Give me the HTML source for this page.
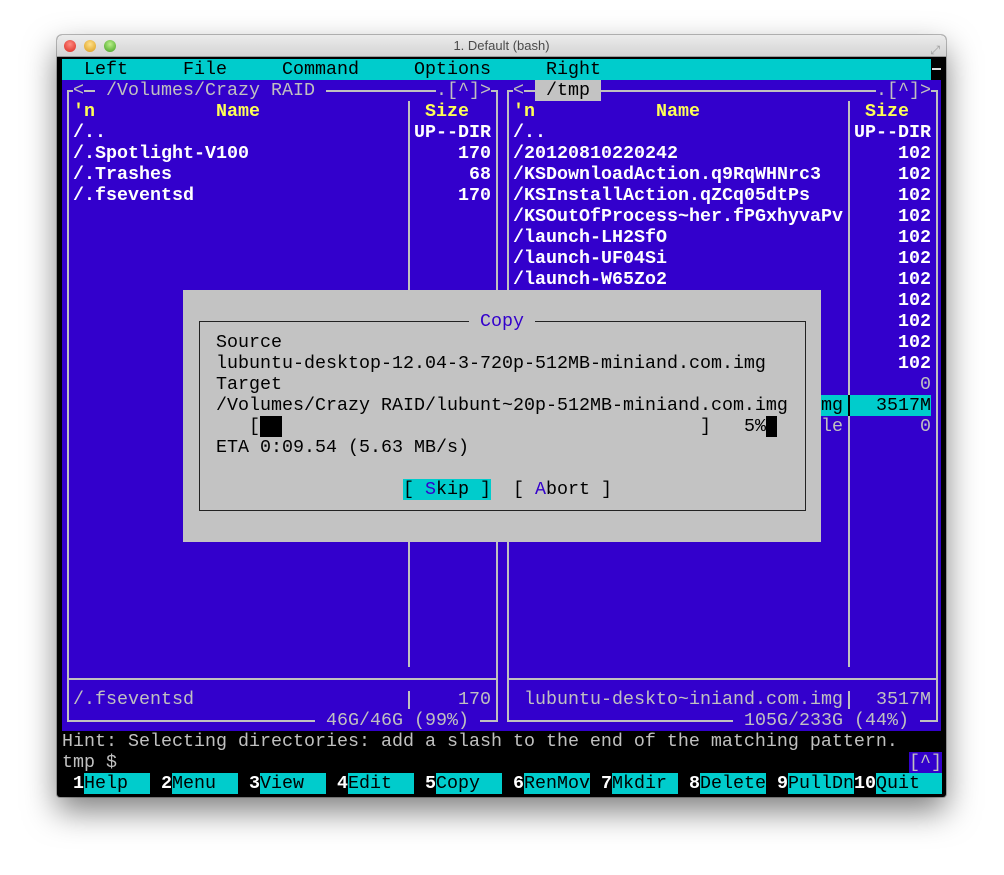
<!DOCTYPE html>
<html><head><meta charset="utf-8"><style>
*{margin:0;padding:0;box-sizing:border-box}
body{width:1004px;height:875px;background:#fff;position:relative;overflow:hidden;font-family:"Liberation Mono",monospace;}
.win{position:absolute;left:57px;top:35px;width:889px;height:762px;border-radius:5px 5px 3px 3px;box-shadow:0 14px 32px rgba(0,0,0,.5),0 0 0 1px rgba(0,0,0,.25);background:#000;overflow:hidden}
.title{position:absolute;left:0;top:0;width:889px;height:22px;background:linear-gradient(#ececec,#d3d3d3);border-bottom:1px solid #999;font-family:"Liberation Sans",sans-serif;font-size:13px;color:#4a4a4a;text-align:center;line-height:22px}
.dot{position:absolute;top:5px;width:12px;height:12px;border-radius:50%}
.t{position:absolute;font-size:18.33px;line-height:21px;height:21px;white-space:pre;color:#c0c0c0}
.b{font-weight:bold;color:#fff}
.y{font-weight:bold;color:#ffff55}
.bg{background:#3300cc}
.k{color:#000}
.h{position:absolute;height:2px;background:#c0c0c0}
.v{position:absolute;width:2px;background:#c0c0c0}
</style></head><body>
<div class="win">
<div class="title">1. Default (bash)
<div class="dot" style="left:7px;background:radial-gradient(circle at 50% 35%,#ff8a80,#d8261c)"></div>
<div class="dot" style="left:27px;background:radial-gradient(circle at 50% 35%,#ffe08a,#d99a16)"></div>
<div class="dot" style="left:47px;background:radial-gradient(circle at 50% 35%,#b9ef8a,#3f9e1c)"></div>
<div style="position:absolute;right:6px;top:4px;font-size:12px;color:#999">⤢</div>
</div>
</div>
<div style="position:absolute;left:62px;top:80px;width:879px;height:651px;background:#3300cc"></div>
<div style="position:absolute;left:62px;top:59px;width:869px;height:21px;background:#00cccc"></div>
<div class="h" style="left:932px;top:68px;width:9px;background:#ddd"></div>
<div class="t k" style="left:84px;top:59px">Left</div>
<div class="t k" style="left:183px;top:59px">File</div>
<div class="t k" style="left:282px;top:59px">Command</div>
<div class="t k" style="left:414px;top:59px">Options</div>
<div class="t k" style="left:546px;top:59px">Right</div>
<div class="h" style="left:67px;top:90px;width:431px"></div>
<div class="h" style="left:507px;top:90px;width:431px"></div>
<div class="h" style="left:67px;top:678px;width:431px"></div>
<div class="h" style="left:507px;top:678px;width:431px"></div>
<div class="h" style="left:67px;top:720px;width:431px"></div>
<div class="h" style="left:507px;top:720px;width:431px"></div>
<div class="v" style="left:67px;top:90px;height:632px"></div>
<div class="v" style="left:496px;top:90px;height:632px"></div>
<div class="v" style="left:507px;top:90px;height:632px"></div>
<div class="v" style="left:936px;top:90px;height:632px"></div>
<div class="v" style="left:408px;top:101px;height:566px"></div>
<div class="v" style="left:848px;top:101px;height:566px"></div>
<div class="v" style="left:408px;top:691px;height:18px"></div>
<div class="v" style="left:848px;top:691px;height:18px"></div>
<div class="t bg" style="left:73px;top:80px">&lt;</div>
<div class="t bg" style="left:95px;top:80px"> /Volumes/Crazy RAID </div>
<div class="t bg" style="left:436px;top:80px">.[^]&gt;</div>
<div class="t bg" style="left:513px;top:80px">&lt;</div>
<div class="t k" style="left:535px;top:80px;background:#c3c3c3"> /tmp </div>
<div class="t bg" style="left:876px;top:80px">.[^]&gt;</div>
<div class="t y" style="left:73px;top:101px">'n</div>
<div class="t y" style="left:216px;top:101px">Name</div>
<div class="t y" style="left:425px;top:101px">Size</div>
<div class="t b" style="left:73px;top:122px">/..</div>
<div class="t b" style="left:414px;top:122px">UP--DIR</div>
<div class="t b" style="left:73px;top:143px">/.Spotlight-V100</div>
<div class="t b" style="left:458px;top:143px">170</div>
<div class="t b" style="left:73px;top:164px">/.Trashes</div>
<div class="t b" style="left:469px;top:164px">68</div>
<div class="t b" style="left:73px;top:185px">/.fseventsd</div>
<div class="t b" style="left:458px;top:185px">170</div>
<div class="t y" style="left:513px;top:101px">'n</div>
<div class="t y" style="left:656px;top:101px">Name</div>
<div class="t y" style="left:865px;top:101px">Size</div>
<div class="t b" style="left:513px;top:122px">/..</div>
<div class="t b" style="left:854px;top:122px">UP--DIR</div>
<div class="t b" style="left:513px;top:143px">/20120810220242</div>
<div class="t b" style="left:513px;top:164px">/KSDownloadAction.q9RqWHNrc3</div>
<div class="t b" style="left:513px;top:185px">/KSInstallAction.qZCq05dtPs</div>
<div class="t b" style="left:513px;top:206px">/KSOutOfProcess~her.fPGxhyvaPv</div>
<div class="t b" style="left:513px;top:227px">/launch-LH2SfO</div>
<div class="t b" style="left:513px;top:248px">/launch-UF04Si</div>
<div class="t b" style="left:513px;top:269px">/launch-W65Zo2</div>
<div class="t b" style="left:898px;top:143px">102</div>
<div class="t b" style="left:898px;top:164px">102</div>
<div class="t b" style="left:898px;top:185px">102</div>
<div class="t b" style="left:898px;top:206px">102</div>
<div class="t b" style="left:898px;top:227px">102</div>
<div class="t b" style="left:898px;top:248px">102</div>
<div class="t b" style="left:898px;top:269px">102</div>
<div class="t b" style="left:898px;top:290px">102</div>
<div class="t b" style="left:898px;top:311px">102</div>
<div class="t b" style="left:898px;top:332px">102</div>
<div class="t b" style="left:898px;top:353px">102</div>
<div class="t" style="left:920px;top:374px">0</div>
<div style="position:absolute;left:513px;top:395px;width:418px;height:21px;background:#00cccc"></div>
<div class="v" style="left:848px;top:395px;height:21px;background:#000"></div>
<div class="t k" style="left:524px;top:395px">lubuntu-deskto~iniand.com.img</div>
<div class="t k" style="left:876px;top:395px">3517M</div>
<div class="t" style="left:821px;top:416px">le</div>
<div class="t" style="left:920px;top:416px">0</div>
<div style="position:absolute;left:183px;top:290px;width:638px;height:252px;background:#c3c3c3"></div>
<div style="position:absolute;left:199px;top:321px;width:607px;height:190px;border:1.5px solid #222"></div>
<div class="t" style="left:469px;top:311px;background:#c3c3c3;color:#3300cc"> Copy </div>
<div class="t k" style="left:216px;top:332px">Source</div>
<div class="t k" style="left:216px;top:353px">lubuntu-desktop-12.04-3-720p-512MB-miniand.com.img</div>
<div class="t k" style="left:216px;top:374px">Target</div>
<div class="t k" style="left:216px;top:395px">/Volumes/Crazy RAID/lubunt~20p-512MB-miniand.com.img</div>
<div class="t k" style="left:249px;top:416px">[</div>
<div style="position:absolute;left:260px;top:416px;width:22px;height:21px;background:#000"></div>
<div class="t k" style="left:700px;top:416px">]   5%</div>
<div style="position:absolute;left:766px;top:416px;width:11px;height:21px;background:#000"></div>
<div class="t k" style="left:216px;top:437px">ETA 0:09.54 (5.63 MB/s)</div>
<div class="t k" style="left:403px;top:479px;background:#00cccc">[ <span style="color:#3300cc">S</span>kip ]</div>
<div class="t k" style="left:513px;top:479px">[ <span style="color:#3300cc">A</span>bort ]</div>
<div class="t" style="left:73px;top:689px">/.fseventsd</div>
<div class="t" style="left:458px;top:689px">170</div>
<div class="t" style="left:524px;top:689px">lubuntu-deskto~iniand.com.img</div>
<div class="t" style="left:876px;top:689px">3517M</div>
<div class="t bg" style="left:315px;top:710px"> 46G/46G (99%) </div>
<div class="t bg" style="left:733px;top:710px"> 105G/233G (44%) </div>
<div class="t" style="left:62px;top:731px">Hint: Selecting directories: add a slash to the end of the matching pattern.</div>
<div class="t" style="left:62px;top:752px">tmp $</div>
<div class="t bg" style="left:909px;top:752px">[^]</div>
<div class="t b" style="left:62px;top:773px"> 1</div><div class="t k" style="left:84px;top:773px;background:#00cccc">Help  </div>
<div class="t b" style="left:150px;top:773px"> 2</div><div class="t k" style="left:172px;top:773px;background:#00cccc">Menu  </div>
<div class="t b" style="left:238px;top:773px"> 3</div><div class="t k" style="left:260px;top:773px;background:#00cccc">View  </div>
<div class="t b" style="left:326px;top:773px"> 4</div><div class="t k" style="left:348px;top:773px;background:#00cccc">Edit  </div>
<div class="t b" style="left:414px;top:773px"> 5</div><div class="t k" style="left:436px;top:773px;background:#00cccc">Copy  </div>
<div class="t b" style="left:502px;top:773px"> 6</div><div class="t k" style="left:524px;top:773px;background:#00cccc">RenMov</div>
<div class="t b" style="left:590px;top:773px"> 7</div><div class="t k" style="left:612px;top:773px;background:#00cccc">Mkdir </div>
<div class="t b" style="left:678px;top:773px"> 8</div><div class="t k" style="left:700px;top:773px;background:#00cccc">Delete</div>
<div class="t b" style="left:766px;top:773px"> 9</div><div class="t k" style="left:788px;top:773px;background:#00cccc">PullDn</div>
<div class="t b" style="left:854px;top:773px">10</div><div class="t k" style="left:876px;top:773px;background:#00cccc">Quit  </div>
</body></html>
